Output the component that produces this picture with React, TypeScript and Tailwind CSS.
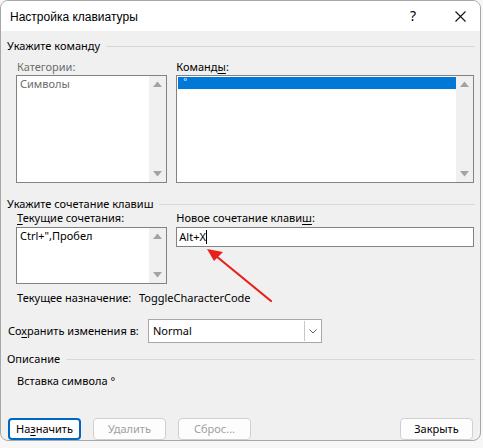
import React from "react";

const font = { fontFamily: '"Noto Sans", "Liberation Sans", sans-serif' };

function GroupHeader({ text, className = "" }: { text: string; className?: string }) {
  return (
    <div className={"flex items-center h-[14px] " + className}>
      <span className="leading-[14px] whitespace-nowrap">{text}</span>
      <div className="flex-1 h-px bg-[#d8d8d8] ml-[6px] mr-[-1px]" />
    </div>
  );
}

function ScrollBar() {
  return (
    <div className="w-[17px] bg-[#f0f0f0] flex flex-col justify-between items-center py-[5px]">
      <svg width="9" height="6" viewBox="0 0 9 6">
        <path d="M0 6 L4.5 0.5 L9 6 Z" fill="#a3a3a3" />
      </svg>
      <svg width="9" height="6" viewBox="0 0 9 6">
        <path d="M0 0 L4.5 5.5 L9 0 Z" fill="#a3a3a3" />
      </svg>
    </div>
  );
}

function Btn({ children, primary, disabled, className = "" }: { children: React.ReactNode; primary?: boolean; disabled?: boolean; className?: string }) {
  return (
    <div
      className={
        "h-[22px] w-[73px] rounded-[4px] flex items-center justify-center bg-[#fdfdfd] whitespace-nowrap " +
        (primary ? "border-2 border-[#0067c0] text-black " : "border border-[#d0d0d0] ") +
        (disabled ? "text-[#a0a0a0] " : "text-black ") +
        className
      }
    >
      {children}
    </div>
  );
}

export default function App() {
  return (
    <div className="w-[483px] h-[448px] bg-[#f7f7f7] relative" style={font}>
      <div className="w-[481px] h-[441px] rounded-[8px] border border-[#a8a8a8] overflow-hidden bg-[#f0f0f0] flex flex-col text-[11px] text-black whitespace-nowrap">
        {/* title bar */}
        <div className="h-[30px] bg-white flex items-center shrink-0">
          <span className="pl-[9px] text-[12px] leading-[14px] pt-[1px] font-['Liberation_Sans',sans-serif]">Настройка клавиатуры</span>
          <div className="flex-1" />
          <span className="w-[20px] text-center text-[14px] leading-none">?</span>
          <div className="w-[17px]" />
          <div className="w-[40px] flex justify-center">
            <svg width="11" height="11" viewBox="0 0 11 11">
              <path d="M0.5 0.5 L10.5 10.5 M10.5 0.5 L0.5 10.5" stroke="#111" strokeWidth="1.1" />
            </svg>
          </div>
        </div>

        <div className="pl-[6px] pr-[6px] flex flex-col flex-1">
          <GroupHeader text="Укажите команду" className="mt-[8px]" />

          <div className="flex pl-[9px] gap-[9px] mt-[7px]">
            <div className="flex flex-col w-[152px]">
              <span className="h-[14px] leading-[14px] text-[#6d6d6d] pl-[1px]">Категории:</span>
              <div className="mt-[1px] h-[108px] border border-[#828282] bg-white flex">
                <div className="flex-1 pl-[3px] pt-[1px] text-[#6d6d6d] leading-[14px]">Символы</div>
                <ScrollBar />
              </div>
            </div>
            <div className="flex flex-col w-[299px]">
              <span className="h-[14px] leading-[14px]">
                Команд<u className="underline-offset-2">ы</u>:
              </span>
              <div className="mt-[1px] h-[108px] border border-[#828282] bg-white flex">
                <div className="flex-1 pl-[1px] pt-[1px]">
                  <div className="h-[12px] bg-[#0078d7] text-white text-[9px] leading-[9px] pl-[5px]">°</div>
                </div>
                <ScrollBar />
              </div>
            </div>
          </div>

          <GroupHeader text="Укажите сочетание клавиш" className="mt-[14px]" />

          <div className="flex pl-[9px] gap-[9px]">
            <div className="flex flex-col w-[152px]">
              <span className="h-[14px] leading-[14px] pl-[1px]">
                <u className="underline-offset-2">Т</u>екущие сочетания:
              </span>
              <div className="mt-[2px] h-[57px] border border-[#828282] bg-white flex">
                <div className="flex-1 pl-[3px] pt-[1px] leading-[14px]">Ctrl+",Пробел</div>
                <ScrollBar />
              </div>
            </div>
            <div className="flex flex-col w-[299px]">
              <span className="h-[14px] leading-[14px]">
                Новое сочетание клави<u className="underline-offset-2">ш</u>:
              </span>
              <div className="mt-[2px] h-[20px] border border-[#828282] bg-white flex items-center pl-[2px]">
                <span className="leading-[14px]">Alt+X</span>
                <div className="w-px h-[14px] bg-black" />
              </div>
            </div>
          </div>

          <div className="flex pl-[10px] mt-[7px] h-[14px] leading-[14px]">
            <span className="w-[122px]">Текущее назначение:</span>
            <span>ToggleCharacterCode</span>
          </div>

          <div className="flex items-center mt-[14px] pl-[1px]">
            <span className="w-[140px] leading-[14px]">
              Со<u className="underline-offset-2">х</u>ранить изменения в:
            </span>
            <div className="w-[174px] h-[24px] border border-[#a8a8a8] bg-white flex">
              <span className="flex-1 pl-[4px] leading-[22px]">Normal</span>
              <div className="w-[16px] my-[1px] mr-[1px] border-l border-[#c8c8c8] flex items-center justify-center">
                <svg width="8" height="5" viewBox="0 0 8 5">
                  <path d="M0.5 0.5 L4 4 L7.5 0.5" stroke="#606060" strokeWidth="1" fill="none" />
                </svg>
              </div>
            </div>
          </div>

          <GroupHeader text="Описание" className="mt-[9px]" />

          <div className="pl-[10px] mt-[8px] h-[14px] leading-[14px]">Вставка символа °</div>

          <div className="flex mt-[30px] pl-[1px] pr-[1px]">
            <Btn primary>
              На<u className="underline-offset-2">з</u>начить
            </Btn>
            <Btn disabled className="ml-[12px]">Удалить</Btn>
            <Btn disabled className="ml-[12px]">Сброс...</Btn>
            <div className="flex-1" />
            <Btn>Закрыть</Btn>
          </div>
        </div>
      </div>

      {/* red annotation arrow */}
      <svg className="absolute left-0 top-0 pointer-events-none" width="483" height="448" viewBox="0 0 483 448">
        <path d="M271 301 L216 256" stroke="#e8201c" strokeWidth="2.2" strokeLinecap="round" />
        <path d="M207 249 L223 252 L214 261 Z" fill="#e8201c" />
      </svg>
    </div>
  );
}
